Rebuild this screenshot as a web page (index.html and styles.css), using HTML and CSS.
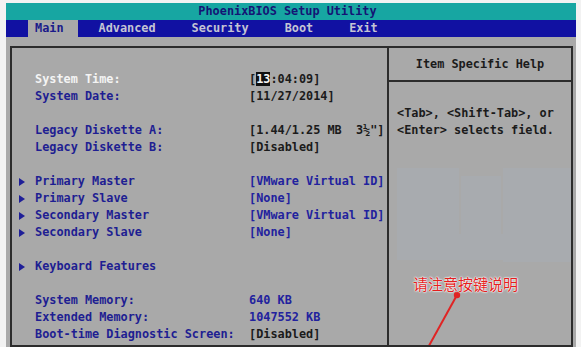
FILE: index.html
```html
<!DOCTYPE html>
<html>
<head>
<meta charset="utf-8">
<link rel="stylesheet" href="styles.css">
</head>
<body>
<div class="screen">
  <div class="title">PhoenixBIOS Setup Utility</div>
  <div class="menubar">
    <span class="tab active">Main</span>
    <span class="tab">Advanced</span>
    <span class="tab">Security</span>
    <span class="tab">Boot</span>
    <span class="tab">Exit</span>
  </div>
  <div class="panel">
    <div class="main">
      <div class="row"><span class="arrow-cell"></span><span class="label sel">System Time:</span><span class="val">[<span class="hl">13</span>:04:09]</span></div>
      <div class="row"><span class="arrow-cell"></span><span class="label">System Date:</span><span class="val">[11/27/2014]</span></div>
      <div class="row blank"></div>
      <div class="row"><span class="arrow-cell"></span><span class="label">Legacy Diskette A:</span><span class="val">[1.44/1.25 MB  3½"]</span></div>
      <div class="row"><span class="arrow-cell"></span><span class="label">Legacy Diskette B:</span><span class="val">[Disabled]</span></div>
      <div class="row blank"></div>
      <div class="row"><span class="arrow-cell"><i class="arrow"></i></span><span class="label">Primary Master</span><span class="val blue">[VMware Virtual ID]</span></div>
      <div class="row"><span class="arrow-cell"><i class="arrow"></i></span><span class="label">Primary Slave</span><span class="val blue">[None]</span></div>
      <div class="row"><span class="arrow-cell"><i class="arrow"></i></span><span class="label">Secondary Master</span><span class="val blue">[VMware Virtual ID]</span></div>
      <div class="row"><span class="arrow-cell"><i class="arrow"></i></span><span class="label">Secondary Slave</span><span class="val blue">[None]</span></div>
      <div class="row blank"></div>
      <div class="row"><span class="arrow-cell"><i class="arrow"></i></span><span class="label">Keyboard Features</span><span class="val"></span></div>
      <div class="row blank"></div>
      <div class="row"><span class="arrow-cell"></span><span class="label">System Memory:</span><span class="val blue">640 KB</span></div>
      <div class="row"><span class="arrow-cell"></span><span class="label">Extended Memory:</span><span class="val blue">1047552 KB</span></div>
      <div class="row"><span class="arrow-cell"></span><span class="label">Boot-time Diagnostic Screen:</span><span class="val">[Disabled]</span></div>
    </div>
    <div class="help">
      <div class="help-head">Item Specific Help</div>
      <div class="help-body">
        <div class="help-line">&lt;Tab&gt;, &lt;Shift-Tab&gt;, or</div>
        <div class="help-line">&lt;Enter&gt; selects field.</div>
      </div>
      <svg class="overlay" width="184" height="300" viewBox="0 0 184 300">
        <g fill="#a4b6ca" opacity="0.18">
          <rect x="8" y="120" width="62" height="92"/>
          <rect x="72" y="128" width="40" height="60"/>
          <rect x="114" y="120" width="68" height="94"/>
          <rect x="40" y="186" width="90" height="26"/>
        </g>
        <line x1="68" y1="247" x2="36" y2="305" stroke="#e02424" stroke-width="2"/>
        <circle cx="68" cy="247" r="3.2" fill="#e02424"/>
      </svg>
      <div class="note">请注意按键说明</div>
    </div>
  </div>
</div>
</body>
</html>
```
FILE: styles.css
```css
* { box-sizing: border-box; }
html, body { margin: 0; padding: 0; }
body {
  background: #f2f2f2;
  width: 581px;
  height: 347px;
  overflow: hidden;
  font-family: "DejaVu Sans Mono", "Liberation Mono", monospace;
  font-weight: bold;
  font-size: 11.85px;
}
.screen {
  margin: 3px 0 0 6px;
  width: 570px;
  height: 344px;
  background: #a9a9a9;
  display: flex;
  flex-direction: column;
  overflow: hidden;
}
.title {
  height: 17px;
  line-height: 17px;
  background: #17a6a2;
  color: #141474;
  text-align: center;
  padding-right: 7px;
  white-space: pre;
}
.menubar {
  height: 17px;
  line-height: 17px;
  background: #1111a2;
  display: flex;
  gap: 22px;
  padding-left: 22px;
}
.tab {
  padding: 0 7px;
  color: #c4c4d4;
  white-space: pre;
}
.tab.active {
  background: #a9a9a9;
  color: #1a1a8a;
  padding: 0 14px 0 7px;
  margin-right: -8px;
}
.panel {
  margin: 9px 3px 0 4px;
  height: 330px;
  border: 2px solid #2c2c2c;
  display: grid;
  grid-template-columns: 375px 1fr;
}
.main {
  padding-top: 23px;
}
.row {
  display: grid;
  grid-template-columns: 23px 214px 1fr;
  height: 17px;
  line-height: 17px;
  white-space: pre;
}
.arrow-cell {
  display: flex;
  align-items: center;
  padding-left: 7px;
}
.arrow {
  width: 0;
  height: 0;
  border-left: 6px solid #1e1e98;
  border-top: 4px solid transparent;
  border-bottom: 4px solid transparent;
}
.label { color: #1e1e92; }
.label.sel { color: #f4f4f4; }
.val { color: #1b1b1b; }
.val.blue { color: #22229e; }
.hl {
  background: #101010;
  color: #f4f4f4;
}
.help {
  position: relative;
  border-left: 2px solid #2c2c2c;
  overflow: hidden;
}
.help-head {
  height: 34px;
  line-height: 32px;
  border-bottom: 2px solid #2c2c2c;
  text-align: center;
  color: #1b1b1b;
  white-space: pre;
}
.help-body {
  padding: 23px 0 0 8px;
  color: #1b1b1b;
}
.help-line {
  height: 17px;
  line-height: 17px;
  white-space: pre;
}
.overlay {
  position: absolute;
  left: 0;
  top: 0;
}
.note {
  position: absolute;
  left: 24px;
  top: 227px;
  font-family: "Noto Sans CJK SC", sans-serif;
  font-weight: normal;
  font-size: 15px;
  line-height: 17px;
  color: #e41e1e;
  text-shadow: 0 0 2px #fff, 0 0 2px #fff, 0 0 1px #fff;
}
```
